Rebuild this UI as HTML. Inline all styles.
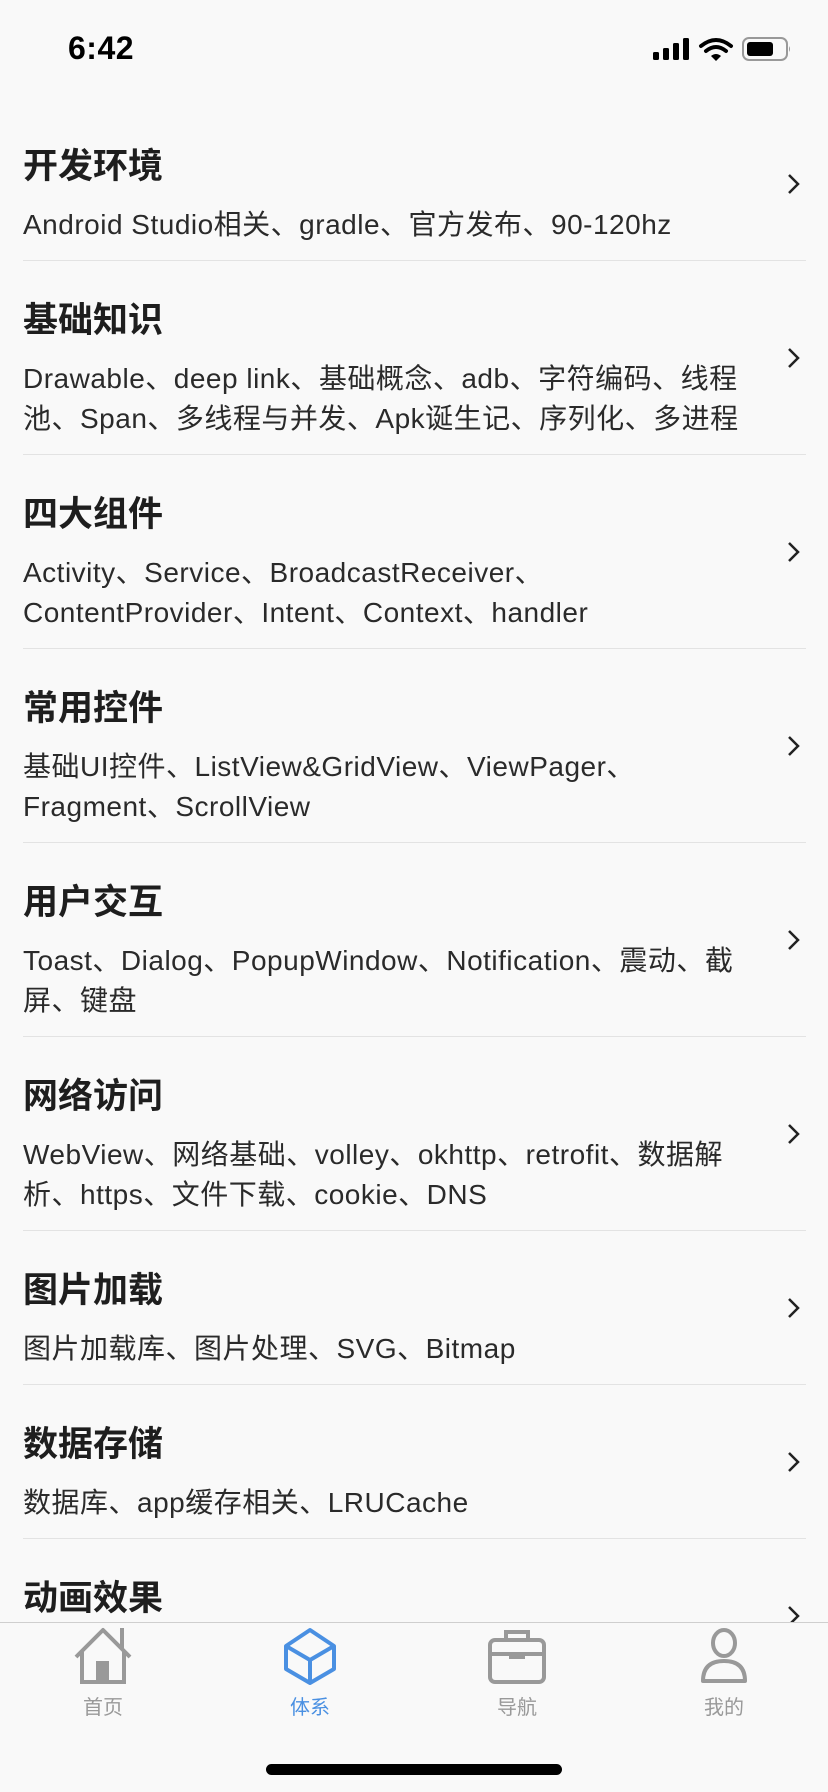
<!DOCTYPE html>
<html><head><meta charset="utf-8"><style>
*{margin:0;padding:0;box-sizing:border-box}
body{width:828px;height:1792px;background:#f9f9f9;position:relative;overflow:hidden;font-family:"Liberation Sans","Noto Sans CJK SC",sans-serif;color:#222}
.time{position:absolute;left:68px;top:30px;font-size:32px;font-weight:bold;color:#000;letter-spacing:0.5px}
.list{position:absolute;top:107px;left:0;width:828px}
.row{position:relative;margin:0 22px 0 23px;padding:40px 0 15px;border-bottom:1.5px solid #e3e3e3}
.t{font-size:35px;font-weight:bold;line-height:40px;height:40px;white-space:nowrap;color:#1e1e1e}
.s{font-size:28px;line-height:40px;margin-top:18px;white-space:nowrap;color:#2a2a2a;letter-spacing:0.5px}
.chev{position:absolute;right:4px;top:50%;margin-top:-12px}
.tab{position:absolute;top:1622px;left:0;width:828px;height:170px;background:#f9f9f9;border-top:1.5px solid #cfcfcf}
.ti{position:absolute;top:0;width:120px;margin-left:-60px;text-align:center}
.ti svg{display:block;margin:4px auto 0}
.ti span{display:block;font-size:20px;margin-top:6px;color:#999}
.bar{position:absolute;left:266px;top:1764px;width:296px;height:11px;border-radius:6px;background:#000}
</style></head><body>
<div class="time">6:42</div>
<svg style="position:absolute;left:653px;top:37px" width="138" height="25" viewBox="0 0 138 25">
<rect x="0" y="15" width="6" height="8" rx="1.5" fill="#000"/>
<rect x="10" y="11" width="6" height="12" rx="1.5" fill="#000"/>
<rect x="20" y="6" width="6" height="17" rx="1.5" fill="#000"/>
<rect x="30" y="1" width="6" height="22" rx="1.5" fill="#000"/>
<path d="M48 9 Q63 -3 78 9" stroke="#000" stroke-width="4" fill="none" stroke-linecap="round"/>
<path d="M53 14 Q63 6 73 14" stroke="#000" stroke-width="4" fill="none" stroke-linecap="round"/>
<path d="M58 19 L63 24 L68 19 Q63 15 58 19Z" fill="#000"/>
<rect x="90" y="1" width="44" height="22" rx="6" fill="none" stroke="#999" stroke-width="2"/>
<rect x="94" y="5" width="26" height="14" rx="3" fill="#000"/>
<path d="M136 9 v6 q2 -3 0 -6z" fill="#999"/>
</svg>
<div class="list">
<div class="row"><div class="t">开发环境</div><div class="s">Android Studio相关、gradle、官方发布、90-120hz</div><svg class="chev" width="16" height="24" viewBox="0 0 16 24"><path d="M3 3 L12 12 L3 21" stroke="#222" stroke-width="2.5" fill="none"/></svg></div>
<div class="row"><div class="t">基础知识</div><div class="s">Drawable、deep link、基础概念、adb、字符编码、线程<br>池、Span、多线程与并发、Apk诞生记、序列化、多进程</div><svg class="chev" width="16" height="24" viewBox="0 0 16 24"><path d="M3 3 L12 12 L3 21" stroke="#222" stroke-width="2.5" fill="none"/></svg></div>
<div class="row"><div class="t">四大组件</div><div class="s">Activity、Service、BroadcastReceiver、<br>ContentProvider、Intent、Context、handler</div><svg class="chev" width="16" height="24" viewBox="0 0 16 24"><path d="M3 3 L12 12 L3 21" stroke="#222" stroke-width="2.5" fill="none"/></svg></div>
<div class="row"><div class="t">常用控件</div><div class="s">基础UI控件、ListView&amp;GridView、ViewPager、<br>Fragment、ScrollView</div><svg class="chev" width="16" height="24" viewBox="0 0 16 24"><path d="M3 3 L12 12 L3 21" stroke="#222" stroke-width="2.5" fill="none"/></svg></div>
<div class="row"><div class="t">用户交互</div><div class="s">Toast、Dialog、PopupWindow、Notification、震动、截<br>屏、键盘</div><svg class="chev" width="16" height="24" viewBox="0 0 16 24"><path d="M3 3 L12 12 L3 21" stroke="#222" stroke-width="2.5" fill="none"/></svg></div>
<div class="row"><div class="t">网络访问</div><div class="s">WebView、网络基础、volley、okhttp、retrofit、数据解<br>析、https、文件下载、cookie、DNS</div><svg class="chev" width="16" height="24" viewBox="0 0 16 24"><path d="M3 3 L12 12 L3 21" stroke="#222" stroke-width="2.5" fill="none"/></svg></div>
<div class="row"><div class="t">图片加载</div><div class="s">图片加载库、图片处理、SVG、Bitmap</div><svg class="chev" width="16" height="24" viewBox="0 0 16 24"><path d="M3 3 L12 12 L3 21" stroke="#222" stroke-width="2.5" fill="none"/></svg></div>
<div class="row"><div class="t">数据存储</div><div class="s">数据库、app缓存相关、LRUCache</div><svg class="chev" width="16" height="24" viewBox="0 0 16 24"><path d="M3 3 L12 12 L3 21" stroke="#222" stroke-width="2.5" fill="none"/></svg></div>
<div class="row"><div class="t">动画效果</div><div class="s">属性动画、补间动画、帧动画</div><svg class="chev" width="16" height="24" viewBox="0 0 16 24"><path d="M3 3 L12 12 L3 21" stroke="#222" stroke-width="2.5" fill="none"/></svg></div>
</div>
<div class="tab">
<div class="ti" style="left:103px"><svg width="62" height="58" viewBox="0 0 62 58"><path d="M4 30 L31 3 L58 30" stroke="#999" stroke-width="4" fill="none" stroke-linejoin="round"/><path d="M50 22 V1" stroke="#999" stroke-width="4"/><path d="M10 25 V55 H52 V25" stroke="#999" stroke-width="4" fill="none"/><rect x="24" y="34" width="13" height="21" fill="#999"/></svg><span>首页</span></div>
<div class="ti" style="left:310px"><svg width="56" height="58" viewBox="0 0 56 58"><path d="M28 3 L52 19 V42 L28 56 L4 42 V19 Z" stroke="#4a90e2" stroke-width="4" fill="none" stroke-linejoin="round"/><path d="M4 19 L28 33 L52 19 M28 33 V56" stroke="#4a90e2" stroke-width="4" fill="none"/></svg><span style="color:#4a90e2">体系</span></div>
<div class="ti" style="left:517px"><svg width="60" height="58" viewBox="0 0 60 58"><rect x="3" y="13" width="54" height="42" rx="5" stroke="#999" stroke-width="4" fill="none"/><path d="M19 13 V5 H41 V13" stroke="#999" stroke-width="4" fill="none"/><path d="M3 27 H57" stroke="#999" stroke-width="4"/><rect x="22" y="27" width="16" height="5" fill="#999"/></svg><span>导航</span></div>
<div class="ti" style="left:724px"><svg width="50" height="58" viewBox="0 0 50 58"><ellipse cx="25" cy="16" rx="11" ry="13" stroke="#999" stroke-width="4" fill="none"/><path d="M4 54 Q4 34 25 34 Q46 34 46 54 Z" stroke="#999" stroke-width="4" fill="none" stroke-linejoin="round"/></svg><span>我的</span></div>
</div>
<div class="bar"></div>
</body></html>
